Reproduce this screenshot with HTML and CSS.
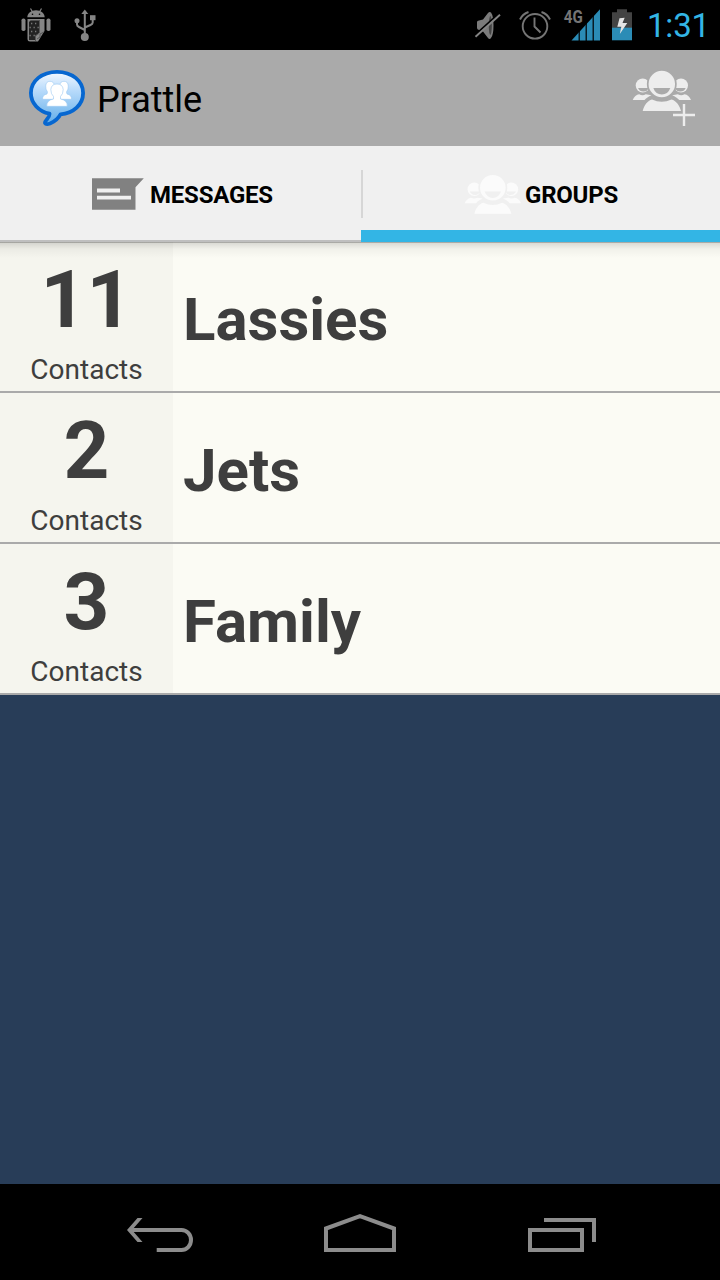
FILE: index.html
```html
<!DOCTYPE html>
<html lang="en">
<head>
<meta charset="utf-8">
<title>Prattle</title>
<link rel="stylesheet" href="styles.css">
</head>
<body>
<svg class="defs" aria-hidden="true">
  <symbol id="people" viewBox="632 69 60 44">
    <path class="shape" d="M632.7 100C634 96.5 636.5 94.8 639.2 94.3Q642.5 96 645.8 94.3L651.5 95.2C648.5 96.5 646 98 644.5 100Z"/>
    <path class="shape" d="M691 100C689.7 96.5 687.2 94.8 684.5 94.3Q681.2 96 677.9 94.3L672.2 95.2C675.2 96.5 677.7 98 679.2 100Z"/>
    <circle class="shape" cx="642.7" cy="85.5" r="7"/>
    <circle class="shape" cx="681" cy="85.5" r="7"/>
    <path class="smile" d="M638 88H648.500Q647.500 91.500 643.500 91.500Q639.500 91.500 638 88Z"/>
    <path class="smile" d="M685.700 88H675.200Q676.200 91.500 680.200 91.500Q684.200 91.500 685.700 88Z"/>
    <path class="shape" d="M642.700 111C644 105.500 647.500 100.500 652 99.500Q661.700 104 671.500 99.500C676 100.500 679.700 105.500 681 111Z"/>
    <circle class="head" cx="661.8" cy="84" r="14.100"/>
    <path class="smile" d="M653.300 88H670.300Q668 94.500 661.800 94.500Q655.600 94.500 653.300 88Z"/>
  </symbol>
</svg>

<div class="screen">
  <header class="status">
    <div class="status-group status-left">
      <svg width="32" height="38" viewBox="20 6 32 38">
        <g fill="#858585">
          <path d="M27.300 17.300C27.500 13.500 31 10.300 36 10.300S44.500 13.500 44.700 17.300Z"/>
          <path d="M30.500 8.500L32.500 12M41.500 8.500L39.500 12" stroke="#858585" stroke-width="1.200"/>
          <rect x="21.500" y="18.500" width="4" height="12.500" rx="1.800"/>
          <rect x="46.500" y="18.500" width="4" height="12.500" rx="1.800"/>
          <path d="M27.500 19H44.500V31L38 41.500H30Q27.500 41.500 27.500 39Z"/>
        </g>
        <circle cx="32.500" cy="14.300" r=".8" fill="#000"/><circle cx="39.500" cy="14.300" r=".8" fill="#000"/>
        <path d="M30.500 20.500H39V33L35 36V40H29V22Z" fill="#222"/>
        <path d="M39.500 20V33L35.500 36V41M44 32L40 34V37L37 39" fill="none" stroke="#555" stroke-width="1"/>
        <path d="M31 23.500H39M29.500 27.500H39M31 31.500H39M29.500 35.500H36" stroke="#777" stroke-width="1.300" stroke-dasharray="1.300 2.700"/>
      </svg>
      <svg width="26" height="38" viewBox="72 6 26 38" fill="none" stroke="#858585" stroke-width="2">
        <path d="M84.800 13V35M77 21V24.500Q77 26 79 27L84.800 30M92.700 18V22.500Q92.700 24 90.500 25L84.800 27.500"/>
        <path d="M84.800 9.500L88.300 14H81.300Z" fill="#858585" stroke="none"/>
        <circle cx="84.800" cy="37" r="4" fill="#858585" stroke="none"/>
        <circle cx="77" cy="20.700" r="2.500" fill="#858585" stroke="none"/>
        <rect x="90" y="15.200" width="5.500" height="5" fill="#858585" stroke="none"/>
      </svg>
    </div>
    <div class="status-group">
      <svg width="30" height="38" viewBox="473 6 30 38">
        <path d="M477 22Q477 20.500 479 20.500L483 19.500L488 13Q489.500 11.500 491 12.500Q493.500 16 493.500 25.500T491 38Q489.500 39.800 488 38L483 31.500L479 30Q477 29.500 477 28Z" fill="#7b7b7b"/>
        <ellipse cx="490.300" cy="25.500" rx="1.500" ry="9.500" fill="#444"/>
        <path d="M474 36L499 13.500" stroke="#000" stroke-width="1.800"/>
        <path d="M475.500 36.700L500 14.800" stroke="#858585" stroke-width="1.900"/>
      </svg>
      <svg class="alarm" width="34" height="38" viewBox="518 6 34 38" fill="none" stroke="#757575" stroke-width="1.900">
        <circle cx="535" cy="26.300" r="12.300"/>
        <path d="M534.500 17.500V26.500L540.500 32.500M520 19.500Q522.500 14 528.500 12M541.500 12Q547.500 14 550 19.500"/>
      </svg>
      <svg class="signal" width="38" height="38" viewBox="563 6 38 38">
        <path d="M571.500 40.500L600 9.200V40.500Z" fill="#2b8cb6"/>
        <path d="M579.200 24V41M586.200 20V41M593.200 12V41" stroke="#000" stroke-width="1.200"/>
        <text class="net" x="563.800" y="23" textLength="19" lengthAdjust="spacingAndGlyphs">4G</text>
      </svg>
      <svg class="battery" width="22" height="38" viewBox="611 6 22 38">
        <path d="M612 12.300H617V9.200H627V12.300H632V28H612Z" fill="#434343"/>
        <path d="M612 27.700H632V40.300H612Z" fill="#2b8cb6"/>
        <path d="M619.500 18.300L624.700 17.700L622.500 23H627.300L619.800 34L621.300 26.700H617.300Z" fill="#e4e4e4"/>
      </svg>
      <span class="clock">1:31</span>
    </div>
  </header>

  <div class="actionbar">
    <svg class="logo" width="58" height="58" viewBox="28 69 58 58">
      <defs>
        <linearGradient id="bubble" x1="0" y1="0" x2="0" y2="1">
          <stop offset="0" stop-color="#f4f9ff"/><stop offset=".35" stop-color="#b9dbfb"/><stop offset="1" stop-color="#62aee8"/>
        </linearGradient>
      </defs>
      <path d="M57 71.800C42 71.800 30.900 81 30.900 93C30.900 103.500 39 111.500 49.500 113.700C50 118 44.500 120.500 45 123Q46 124.800 50 123.500C56 121 58.500 118 60.500 114.300C73.500 113.500 83.100 104.500 83.100 93C83.100 81 72 71.800 57 71.800Z" fill="url(#bubble)" stroke="#0767d0" stroke-width="3.800" stroke-linejoin="round"/>
      <g fill="#fff" stroke="#9bc8f2" stroke-width=".6">
        <path d="M42.500 99.300Q42.300 94.800 47 94L47.500 92Q45.500 89.500 45.700 86Q46 81.300 50 81.300T54.500 86L54 92L57 99.300Z"/>
        <path d="M71.500 99.300Q71.700 94.800 67 94L66.500 92Q68.500 89.500 68.300 86Q68 81.300 64 81.300T59.500 86L60 92L57 99.300Z"/>
        <path d="M46.800 106.300Q46.500 100.200 53.500 99V96.500Q50.800 94 50.800 89.500Q51.300 84 57 84T63.200 89.500Q63.200 94 60.500 96.500V99Q67.500 100.200 67.200 106.300Z"/>
      </g>
    </svg>
    <h1 class="title">Prattle</h1>
    <div class="add-group">
      <svg class="people" width="60" height="44"><use href="#people"/></svg>
      <svg class="plus" width="22" height="22" viewBox="0 0 22 22"><path d="M0 11H22M11 0V22" stroke="#ededed" stroke-width="2.400"/></svg>
    </div>
  </div>

  <nav class="tabs">
    <div class="tab tab-messages">
      <svg class="message-icon" width="52" height="33" viewBox="92 178 52 33">
        <path d="M92 178.300H143.800L135.500 187.300V209.800H92Z" fill="#818181"/>
        <path d="M97 190.500H120M97 197.700H131" stroke="#f0f0f0" stroke-width="3.800"/>
      </svg>
      <span class="tab-label">MESSAGES</span>
    </div>
    <div class="tab tab-groups">
      <svg class="people" width="58" height="43"><use href="#people"/></svg>
      <span class="tab-label groups-label">GROUPS</span>
    </div>
  </nav>

  <main class="list">
    <section class="row">
      <div class="count"><strong class="number">11</strong><span class="caption">Contacts</span></div>
      <h2 class="name">Lassies</h2>
    </section>
    <section class="row">
      <div class="count"><strong class="number">2</strong><span class="caption">Contacts</span></div>
      <h2 class="name">Jets</h2>
    </section>
    <section class="row">
      <div class="count"><strong class="number">3</strong><span class="caption">Contacts</span></div>
      <h2 class="name">Family</h2>
    </section>
  </main>

  <footer class="navbar">
    <svg width="68" height="40" viewBox="126 1213 68 40"><path d="M130 1230H181.500A9.500 10 0 0 1 181.500 1250H156.700"/><path d="M142.500 1218H137.500L127 1230L137.500 1242H142.500L132 1230Z" class="solid"/></svg>
    <svg width="74" height="40" viewBox="324 1213 74 40"><path d="M326 1228.500L360 1216.200L394 1228.500V1250H326Z"/></svg>
    <svg width="70" height="40" viewBox="527 1213 70 40"><path d="M530 1230H582V1250H530ZM544 1220H594V1242"/></svg>
  </footer>
</div>
</body>
</html>
```

FILE: styles.css
```css
* { box-sizing: border-box; }

body {
  margin: 0;
  background: #000;
  font-family: Roboto, "Liberation Sans", sans-serif;
}

svg { display: block; flex: none; }
.defs { position: absolute; width: 0; height: 0; }

.screen {
  width: 720px;
  height: 1280px;
  display: flex;
  flex-direction: column;
  overflow: hidden;
  background: #283d58;
}

.status {
  height: 50px;
  flex: none;
  display: flex;
  justify-content: space-between;
  align-items: center;
  padding: 0 14px 0 20px;
  background: #000;
}
.status-group { display: flex; align-items: center; }
.status-left { gap: 20px; }
.alarm { margin-left: 15px; }
.signal { margin-left: 11px; }
.battery { margin-left: 10px; }
.net { font-size: 18px; font-weight: 700; fill: #757575; }
.clock {
  width: 59px;
  margin-left: 14px;
  font-size: 33px;
  line-height: 50px;
  color: #33b5e5;
  white-space: nowrap;
  padding-top: 2px;
  letter-spacing: -.2px;
}

.actionbar {
  height: 96px;
  flex: none;
  display: flex;
  align-items: center;
  padding: 0 24px 0 28px;
  background: #aaa;
}
.title {
  margin: 4px 0 0 11px;
  font-size: 36px;
  font-weight: 400;
  line-height: 42px;
  color: #000;
}

.people { --ink: #ededed; --gap: #aaa; }
.shape { fill: var(--ink); }
.head { fill: var(--ink); stroke: var(--gap); stroke-width: 1.7px; }
.smile { fill: var(--gap); }

.add-group {
  position: relative;
  width: 64px;
  height: 58px;
  margin-left: auto;
}
.plus { position: absolute; right: 1px; bottom: 1px; }

.tabs {
  height: 96px;
  flex: none;
  display: flex;
  background: #f0f0f0;
}
.tab { display: flex; align-items: center; }
.tab-messages {
  width: 361px;
  padding-left: 92px;
  border-bottom: 2px solid #bfbfbf;
}
.message-icon { margin-top: 2px; }
.tab-groups {
  flex: 1;
  padding: 12px 0 0 103px;
  border-bottom: 12px solid #33b5e5;
  background: linear-gradient(#d6d6d6, #d6d6d6) 0 24px / 2px 48px no-repeat;
}
.tab-groups .people { --ink: #fbfbfb; --gap: #f0f0f0; }
.tab-label {
  margin: 3px 0 0 6px;
  font-size: 24px;
  font-weight: 700;
  line-height: 28px;
  letter-spacing: -.22px;
  color: #000;
}
.groups-label { margin: 1px 0 0 3px; }

.list { background: #fbfbf4; position: relative; }
.list::before {
  content: "";
  position: absolute;
  inset: 0 0 auto;
  height: 16px;
  background: linear-gradient(rgba(0,0,0,.32) 0 1px, rgba(0,0,0,.13) 1px, rgba(0,0,0,.04) 7px, transparent);
}
.row {
  height: 151px;
  display: flex;
  border-bottom: 2px solid #aaa;
  color: #3e3e3e;
}
.count {
  width: 173px;
  background: #f5f5ee;
  display: flex;
  flex-direction: column;
  align-items: center;
}
.number { margin-top: 11px; font-size: 80px; line-height: 94px; font-weight: 700; }
.caption { margin-top: 6px; font-size: 28px; line-height: 33px; }
.name {
  margin: 8px 0 0 10px;
  font-size: 60px;
  line-height: 140px;
  font-weight: 700;
}

.navbar {
  height: 96px;
  margin-top: auto;
  flex: none;
  display: flex;
  justify-content: space-between;
  align-items: center;
  padding: 2px 123px 0 126px;
  background: #000;
}
.navbar svg { fill: none; stroke: #8c8c8c; stroke-width: 4px; }
.navbar .solid { fill: #8c8c8c; stroke: none; }
```
